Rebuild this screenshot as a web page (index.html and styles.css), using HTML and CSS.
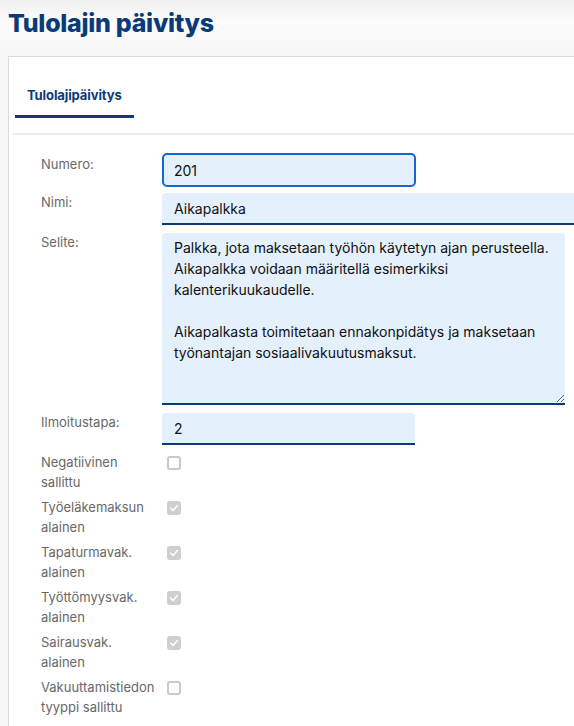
FILE: index.html
```html
<!DOCTYPE html>
<html lang="fi">
<head>
<meta charset="utf-8">
<title>Tulolajin päivitys</title>
<link rel="stylesheet" href="styles.css">
</head>
<body>
<div class="page">
  <header class="page-header">
    <h1 class="page-title">Tulolajin päivitys</h1>
  </header>
  <section class="card">
    <nav class="tabs">
      <div class="tab tab-active">Tulolajipäivitys</div>
    </nav>
    <div class="tabs-rule"></div>
    <form class="form">
      <div class="row row-first">
        <label class="label label-first">Numero:</label>
        <input class="field field-short field-focus" type="text" value="201">
      </div>
      <div class="row">
        <label class="label">Nimi:</label>
        <input class="field field-wide" type="text" value="Aikapalkka">
      </div>
      <div class="row">
        <label class="label">Selite:</label>
        <textarea class="field field-area">Palkka, jota maksetaan työhön käytetyn ajan perusteella.
Aikapalkka voidaan määritellä esimerkiksi
kalenterikuukaudelle.

Aikapalkasta toimitetaan ennakonpidätys ja maksetaan
työnantajan sosiaalivakuutusmaksut.</textarea>
      </div>
      <div class="row">
        <label class="label">Ilmoitustapa:</label>
        <input class="field field-short" type="text" value="2">
      </div>
      <div class="row row-check">
        <label class="label">Negatiivinen<br>sallittu</label>
        <span class="check"></span>
      </div>
      <div class="row row-check">
        <label class="label">Työeläkemaksun<br>alainen</label>
        <span class="check check-on"><svg viewBox="0 0 14 14" width="14" height="14"><path d="M3.2 7.2 L6 10 L10.8 4.2" fill="none" stroke="#fff" stroke-width="1.8" stroke-linecap="round" stroke-linejoin="round"/></svg></span>
      </div>
      <div class="row row-check">
        <label class="label">Tapaturmavak.<br>alainen</label>
        <span class="check check-on"><svg viewBox="0 0 14 14" width="14" height="14"><path d="M3.2 7.2 L6 10 L10.8 4.2" fill="none" stroke="#fff" stroke-width="1.8" stroke-linecap="round" stroke-linejoin="round"/></svg></span>
      </div>
      <div class="row row-check">
        <label class="label">Työttömyysvak.<br>alainen</label>
        <span class="check check-on"><svg viewBox="0 0 14 14" width="14" height="14"><path d="M3.2 7.2 L6 10 L10.8 4.2" fill="none" stroke="#fff" stroke-width="1.8" stroke-linecap="round" stroke-linejoin="round"/></svg></span>
      </div>
      <div class="row row-check">
        <label class="label">Sairausvak.<br>alainen</label>
        <span class="check check-on"><svg viewBox="0 0 14 14" width="14" height="14"><path d="M3.2 7.2 L6 10 L10.8 4.2" fill="none" stroke="#fff" stroke-width="1.8" stroke-linecap="round" stroke-linejoin="round"/></svg></span>
      </div>
      <div class="row row-check">
        <label class="label">Vakuuttamistiedon<br>tyyppi sallittu</label>
        <span class="check"></span>
      </div>
    </form>
  </section>
</div>
</body>
</html>
```
FILE: styles.css
```css
html, body {
  margin: 0;
  padding: 0;
}
body {
  background: #f6f6f6;
  font-family: Inter, "Open Sans", Arial, sans-serif;
  overflow: hidden;
}
.page {
  width: 100%;
}
.page-header {
  height: 56px;
  background: linear-gradient(to bottom, #f0f0f0 0%, #fcfcfc 40%, #f6f6f6 100%);
  padding: 0 8px;
  box-sizing: border-box;
}
.page-title {
  margin: 0;
  padding-top: 6px;
  font-size: 25px;
  line-height: 34px;
  font-weight: 800;
  color: #0b3a78;
  letter-spacing: -0.3px;
}
.card {
  margin-left: 8px;
  background: #fff;
  border: 1px solid #dcdcdc;
  border-right: none;
  min-height: 700px;
}
.tabs {
  display: flex;
  padding-left: 6px;
}
.tab {
  padding: 30px 12px 12px;
  font-size: 13px;
  line-height: 16px;
  font-weight: 700;
  color: #0b3a78;
  letter-spacing: -0.1px;
}
.tab-active {
  border-bottom: 3px solid #0b3a78;
}
.tabs-rule {
  margin: 15px 0 0 3px;
  height: 2px;
  background: #efefef;
}
.form {
  padding: 18px 0 0 32px;
  display: flex;
  flex-direction: column;
}
.row {
  display: flex;
  align-items: flex-start;
  margin-bottom: 8px;
}
.row-first {
  margin-bottom: 6px;
}
.row-check {
  margin-bottom: 6px;
}
.label {
  width: 121px;
  flex: none;
  font-size: 13px;
  line-height: 19.5px;
  color: #686868;
}
.label-first {
  padding-top: 2px;
}
.field {
  box-sizing: border-box;
  margin: 0;
  font-family: inherit;
  font-size: 14px;
  color: #111;
  background: #e4f0fc;
  border: none;
  border-bottom: 2px solid #0b3a78;
  border-radius: 4px 4px 0 0;
  padding: 0 12px;
  height: 32px;
  outline: none;
}
.field-short {
  width: 253px;
}
.field-wide {
  flex: 1;
  min-width: 0;
  border-radius: 4px 0 0 0;
}
.field-focus {
  width: 254px;
  height: 34px;
  border: 2px solid #1565d8;
  border-radius: 5px;
  padding: 0 10px;
}
.field-area {
  width: 403px;
  height: 172px;
  padding: 4px 12px;
  line-height: 21px;
  resize: both;
  white-space: pre-wrap;
}
.check {
  box-sizing: border-box;
  width: 14px;
  height: 14px;
  margin: 3px 0 0 5px;
  border: 2px solid #c9c9c9;
  border-radius: 3px;
  background: #fff;
  display: flex;
  align-items: center;
  justify-content: center;
}
.check-on {
  background: #cfcfcf;
  border-color: #cfcfcf;
}
.check-on svg {
  flex: none;
  width: 12px;
  height: 12px;
}
```
